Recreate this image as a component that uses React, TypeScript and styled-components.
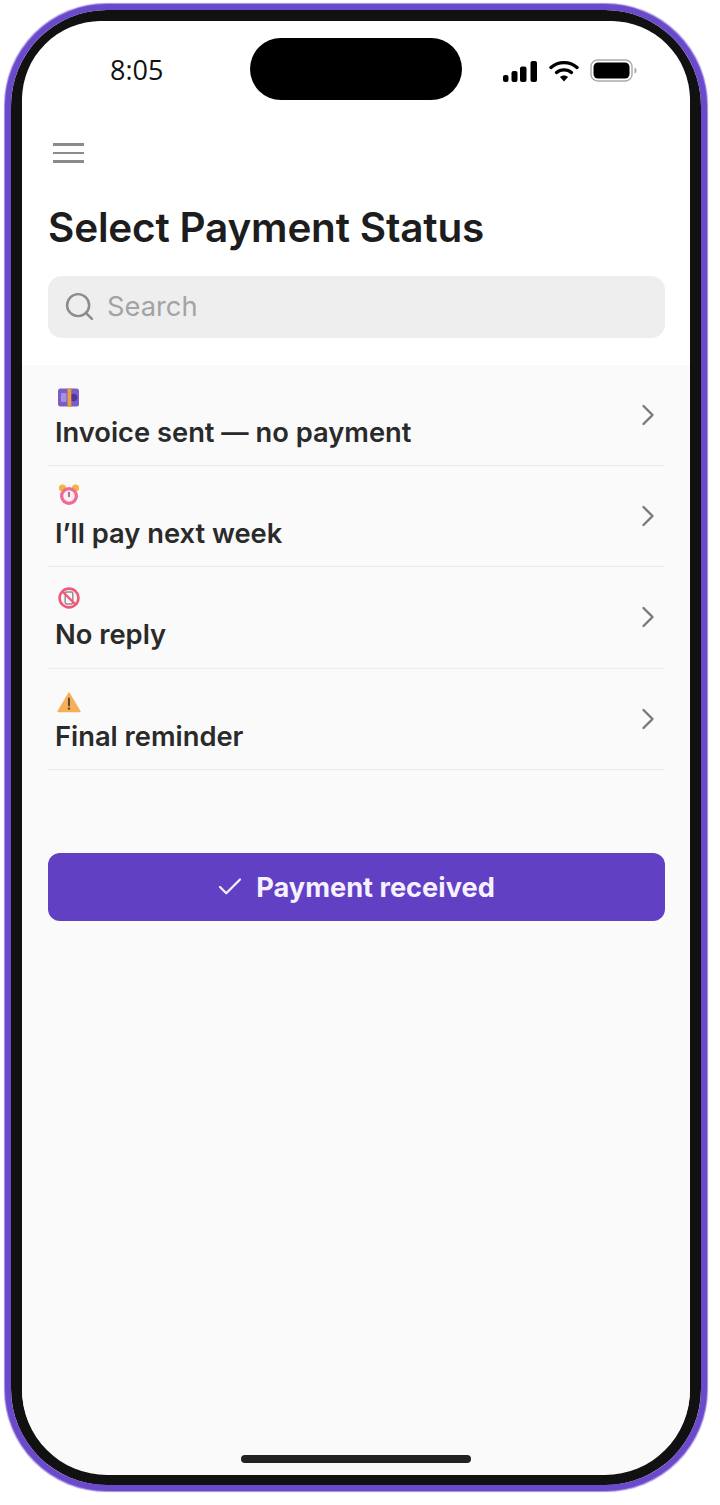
import React from 'react'
import styled, { createGlobalStyle } from 'styled-components'
import { ChevronRight, Search, Check } from 'lucide-react'

const GlobalStyle = createGlobalStyle`
  html, body {
    margin: 0;
    background: #fff;
    font-family: 'Inter', 'Liberation Sans', sans-serif;
  }
`

const BillIcon = () => (
  <svg width="24" height="20" viewBox="0 0 24 20">
    <rect x="1" y="1" width="21" height="18" rx="2.500" fill="#7b5cc9" />
    <rect x="4" y="5.500" width="5.500" height="9" rx="1" fill="#a48fe0" />
    <circle cx="16.500" cy="10" r="3.800" fill="#4f3796" />
    <rect x="10.500" y="0.500" width="3.800" height="19" fill="#e9a23b" />
  </svg>
)

const ClockIcon = () => (
  <svg width="24" height="24" viewBox="0 0 24 24">
    <circle cx="5.500" cy="5" r="3.600" fill="#f2b544" />
    <circle cx="18.500" cy="5" r="3.600" fill="#f2b544" />
    <circle cx="12" cy="13" r="9" fill="#ef6a97" />
    <circle cx="12" cy="13" r="5.800" fill="#fbeef1" />
    <path d="M12 9.500V13.500" stroke="#7a4a58" strokeWidth="1.400" strokeLinecap="round" />
  </svg>
)

const NoPhoneIcon = () => (
  <svg width="24" height="24" viewBox="0 0 24 24">
    <circle cx="12" cy="12" r="9.400" fill="#fdf4f5" stroke="#ec5a78" strokeWidth="2.600" />
    <rect x="8.200" y="6" width="7.600" height="12" rx="1.400" fill="none" stroke="#8d8a94" strokeWidth="1.400" />
    <path d="M5.500 5.500L18.500 18.500" stroke="#ec5a78" strokeWidth="2.400" />
  </svg>
)

const WarningIcon = () => (
  <svg width="24" height="22" viewBox="0 0 24 22">
    <path d="M12 2L23 20.500H1Z" fill="#f6ae58" stroke="#f6ae58" strokeWidth="1.400" strokeLinejoin="round" />
    <path d="M12 7.500V14.500" stroke="#5d4530" strokeWidth="2" strokeLinecap="round" />
    <circle cx="12" cy="17.600" r="1.200" fill="#5d4530" />
  </svg>
)

const SignalIcon = () => (
  <svg width="35" height="21" viewBox="0 0 35 21">
    <rect x="0" y="14" width="5.500" height="7" rx="2" fill="#000" />
    <rect x="8.500" y="10" width="6" height="11" rx="2" fill="#000" />
    <rect x="17" y="5.500" width="6.500" height="15.500" rx="2" fill="#000" />
    <rect x="27.500" y="0" width="6.500" height="21" rx="2" fill="#000" />
  </svg>
)

const WifiIcon = () => (
  <svg width="30" height="22" viewBox="0 0 30 22">
    <path d="M2 7.500C9.500 1 20.500 1 28 7.500" fill="none" stroke="#000" strokeWidth="3.400" strokeLinecap="round" />
    <path d="M7.500 12.500C11.500 9 18.500 9 22.500 12.500" fill="none" stroke="#000" strokeWidth="3.400" strokeLinecap="round" />
    <path d="M11 17L15 21.500L19 17C17 15 13 15 11 17Z" fill="#000" />
  </svg>
)

const BatteryIcon = () => (
  <svg width="48" height="23" viewBox="0 0 48 23">
    <rect x="1" y="1" width="41" height="21" rx="6.500" fill="none" stroke="#aaa" strokeWidth="1.400" />
    <rect x="3.500" y="3.500" width="36" height="16" rx="4.500" fill="#000" />
    <path d="M44.500 8.500C46 9 46.500 10 46.500 11.500C46.500 13 46 14 44.500 14.500Z" fill="#aaa" />
  </svg>
)

const statuses = [
  { icon: <BillIcon />, label: 'Invoice sent — no payment', nudge: -0.5 },
  { icon: <ClockIcon />, label: 'I’ll pay next week', nudge: -4 },
  { icon: <NoPhoneIcon />, label: 'No reply', nudge: -2 },
  { icon: <WarningIcon />, label: 'Final reminder', nudge: 0 },
]

const App: React.FC = () => (
  <>
    <GlobalStyle />
    <Page>
      <Phone>
        <StatusBar>
          <Time>8:05</Time>
          <Notch />
          <StatusIcons>
            <SignalIcon />
            <WifiIcon />
            <BatteryIcon />
          </StatusIcons>
        </StatusBar>
        <Header>
          <MenuButton>
            <span />
            <span />
            <span />
          </MenuButton>
          <Title>Select Payment Status</Title>
          <SearchBox>
            <Search size={33} strokeWidth={1.8} color="#8c8c8c" />
            <SearchText>Search</SearchText>
          </SearchBox>
        </Header>
        <Content>
          <List>
            {statuses.map((status) => (
              <Row key={status.label}>
                <RowBody>
                  <RowIcon $nudge={status.nudge}>{status.icon}</RowIcon>
                  <RowLabel>{status.label}</RowLabel>
                </RowBody>
                <RowChevron>
                  <ChevronRight size={36} strokeWidth={1.6} color="#7a7a7a" />
                </RowChevron>
              </Row>
            ))}
          </List>
          <PrimaryButton>
            <Check size={30} strokeWidth={1.8} color="#f3effd" />
            Payment received
          </PrimaryButton>
          <HomeIndicator />
        </Content>
      </Phone>
    </Page>
  </>
)

const Page = styled.div`
  width: 720px;
  height: 1505px;
  padding: 4px 0 0 5px;
  box-sizing: border-box;
`

const Phone = styled.div`
  width: 702px;
  height: 1487px;
  box-sizing: border-box;
  border: 6px solid #6a4acb;
  border-radius: 102px;
  box-shadow: inset 0 0 0 11px #111, 0 0 1px 0.500px #a08ae2;
  padding: 11px 11px 10px;
  display: flex;
  flex-direction: column;
  background: #fff;
  overflow: hidden;
`

const StatusBar = styled.div`
  height: 79px;
  flex: none;
  display: grid;
  grid-template-columns: 228px 212px 1fr;
  align-items: start;
  background: #fff;
  border-radius: 85px 85px 0 0;
  padding-top: 17px;
  box-sizing: border-box;
`

const Time = styled.div`
  font-family: 'Open Sans', sans-serif;
  font-size: 27px;
  font-weight: 500;
  line-height: 34px;
  color: #111;
  padding: 15px 0 0 88px;
`

const Notch = styled.div`
  height: 62px;
  border-radius: 31px;
  background: #000;
`

const StatusIcons = styled.div`
  display: flex;
  align-items: flex-end;
  gap: 11px;
  padding: 21px 0 0 41px;
`

const Header = styled.div`
  flex: none;
  height: 265px;
  box-sizing: border-box;
  padding: 43px 25px 0 26px;
  background: #fff;
`

const MenuButton = styled.div`
  display: flex;
  flex-direction: column;
  gap: 6px;
  width: 31px;
  margin-left: 5px;

  span {
    display: block;
    height: 2.500px;
    background: #8b8b8b;
  }
`

const Title = styled.h1`
  margin: 42px 0 0;
  font-size: 40.500px;
  line-height: 46px;
  font-weight: 600;
  letter-spacing: -0.200px;
  color: #1d1d1d;
`

const SearchBox = styled.div`
  margin-top: 25px;
  height: 62px;
  border-radius: 14px;
  background: #eeeeee;
  display: flex;
  align-items: center;
  gap: 11px;
  padding-left: 15px;
`

const SearchText = styled.span`
  font-size: 27.300px;
  color: #a3a3a3;
`

const Content = styled.div`
  flex: 1;
  display: flex;
  flex-direction: column;
  align-items: stretch;
  padding: 0 25px 0 26px;
  background: #fafafa;
  border-radius: 0 0 85px 85px;
`

const List = styled.div`
  display: flex;
  flex-direction: column;
`

const Row = styled.div`
  height: 101.500px;
  box-sizing: border-box;
  border-bottom: 1.500px solid #ebebeb;
  display: flex;
  align-items: center;
  justify-content: space-between;
  padding: 0 0 0 7px;

  &:first-child {
    height: 100.500px;
  }
`

const RowBody = styled.div`
  display: flex;
  flex-direction: column;
  align-self: flex-start;
  padding-top: 20px;
`

const RowIcon = styled.div<{ $nudge: number }>`
  height: 26px;
  margin-bottom: 5px;
  margin-left: 2px;
  display: flex;
  align-items: center;
  transform: translateY(${(props) => props.$nudge}px);
`

const RowLabel = styled.div`
  font-size: 27.300px;
  line-height: 34px;
  font-weight: 600;
  color: #2a2a2a;
`

const RowChevron = styled.div`
  display: flex;
  margin-right: -1px;
`

const PrimaryButton = styled.div`
  margin-top: 83px;
  height: 68px;
  border-radius: 12px;
  background: #6140c4;
  color: #f5f1ff;
  font-size: 27.200px;
  font-weight: 700;
  display: flex;
  align-items: center;
  justify-content: center;
  gap: 11px;
  padding-right: 3px;
`

const HomeIndicator = styled.div`
  width: 230px;
  height: 8px;
  border-radius: 4px;
  background: #222;
  margin: auto 0 12px 193px;
`

export default App
